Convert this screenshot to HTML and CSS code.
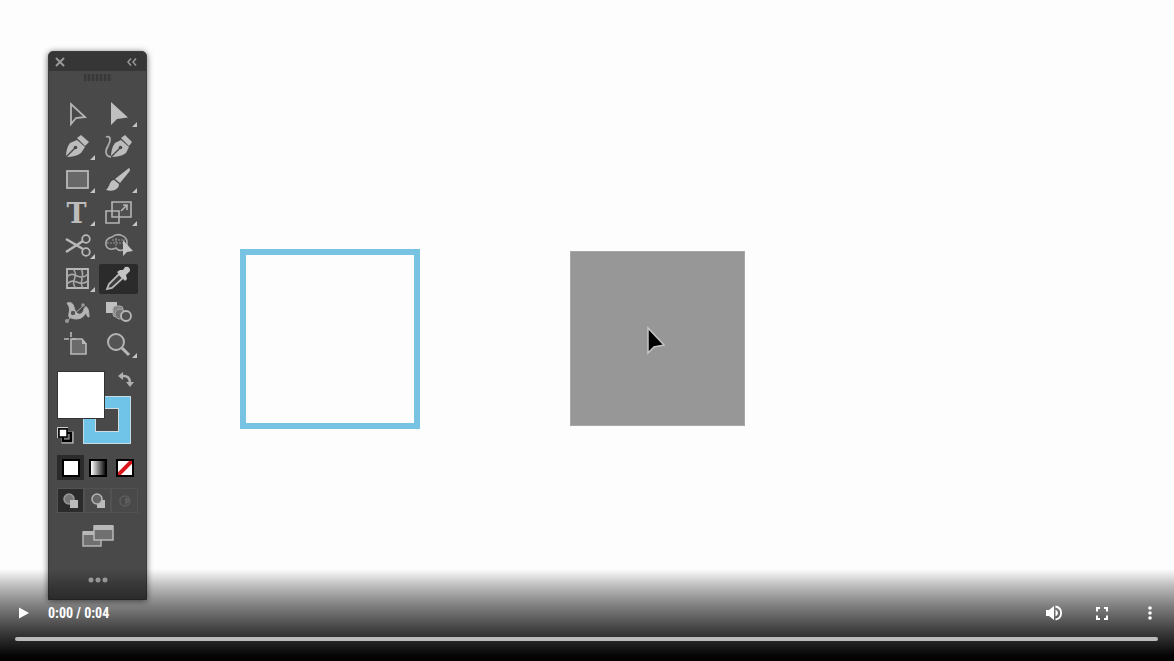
FILE: index.html
```
<!DOCTYPE html>
<html lang="en">
<head>
  <meta charset="UTF-8">
  <meta name="viewport" content="width=device-width, initial-scale=1.0">
  <title>Eyedropper tool</title>
  <link rel="stylesheet" href="styles.css">
</head>
<body>
  <main class="player">
    <div class="artboard">
      <div class="shape outlined"></div>
      <div class="shape filled"></div>
      <svg class="cursor" width="24" height="32" viewBox="0 0 24 32">
        <path d="M4 3V28L10 22L20 20Z" fill="#000" stroke="#c4c4c4" stroke-width="1.5"/>
      </svg>

      <section class="toolbox" aria-label="Tools">
        <header class="toolbox-header">
          <button type="button" aria-label="Close"><svg width="10" height="10" viewBox="0 0 10 10"><path d="M1 1L9 9M9 1L1 9" stroke="#999" stroke-width="2"/></svg></button>
          <button type="button" aria-label="Collapse"><svg width="10" height="8" viewBox="0 0 10 8"><path d="M4 0.5L1 4L4 7.5M9 0.5L6 4L9 7.5" fill="none" stroke="#999" stroke-width="1.5"/></svg></button>
        </header>
        <div class="grip"></div>

        <div class="tools">
          <button type="button" class="tool" aria-label="Selection">
            <svg viewBox="0 0 39 30"><path d="M14 5V25L19 19L28 18Z" fill="none" stroke="#b4b4b4" stroke-width="1.8"/></svg>
          </button>
          <button type="button" class="tool more" aria-label="Direct selection">
            <svg viewBox="0 0 39 30"><path d="M12 3V26L18 20L29 18.5Z" fill="#c0c0c0"/></svg>
          </button>
          <button type="button" class="tool more" aria-label="Pen">
            <svg viewBox="0 0 39 30">
              <path d="M9 25Q9 16 13 11L20 8L28 15L24 21Q19 25 9 25Z" fill="#bcbcbc"/>
              <path d="M20 6L24 3L32 10L28 14Z" fill="#bcbcbc"/>
              <path d="M9 25L18 16" stroke="#484848" stroke-width="1.4"/><circle cx="18.5" cy="15.5" r="1.8" fill="#484848"/>
            </svg>
          </button>
          <button type="button" class="tool" aria-label="Curvature">
            <svg viewBox="0 0 39 30">
              <path d="M12 25Q12 16 16 11L22 8L30 15L27 21Q22 25 12 25Z" fill="#bcbcbc"/>
              <path d="M22 6L26 3L33 10L30 14Z" fill="#bcbcbc"/>
              <path d="M12 25L21 16" stroke="#484848" stroke-width="1.4"/><circle cx="21.5" cy="15.5" r="1.8" fill="#484848"/>
              <path d="M7 5C12 3 12 9 9 14C6 19 6 24 12 25" fill="none" stroke="#aaa" stroke-width="1.8"/>
            </svg>
          </button>
          <button type="button" class="tool more" aria-label="Rectangle">
            <svg viewBox="0 0 39 30"><rect x="10" y="6" width="21" height="17" fill="#686868" stroke="#b8b8b8" stroke-width="1.8"/></svg>
          </button>
          <button type="button" class="tool more" aria-label="Paintbrush">
            <svg viewBox="0 0 39 30"><path d="M30 3Q32 4 30 7L21 18L16 14Z" fill="#c0c0c0"/><path d="M15 15L20 19C20 24 15 27 7 25C11 22 10 16 15 15Z" fill="#c0c0c0"/></svg>
          </button>
          <button type="button" class="tool type-tool more" aria-label="Type">T</button>
          <button type="button" class="tool more" aria-label="Scale">
            <svg viewBox="0 0 39 30"><path d="M13 4H32V19H13Z" fill="#505050" stroke="#b4b4b4" stroke-width="1.6"/><path d="M7 13H20V25H7Z" fill="none" stroke="#b4b4b4" stroke-width="1.6"/><path d="M22 13L28 7M24 7H28V12" fill="none" stroke="#b4b4b4" stroke-width="1.6"/></svg>
          </button>
          <button type="button" class="tool more" aria-label="Scissors">
            <svg viewBox="0 0 39 30"><path d="M9 8L26 18M9 21L26 10" stroke="#b8b8b8" stroke-width="2.6"/><circle cx="29" cy="8" r="3.8" fill="none" stroke="#b8b8b8" stroke-width="1.8"/><circle cx="29" cy="21" r="3.8" fill="none" stroke="#b8b8b8" stroke-width="1.8"/></svg>
          </button>
          <button type="button" class="tool" aria-label="Shape builder">
            <svg viewBox="0 0 39 30"><path d="M13 6C19 1 29 5 28 13C27 20 20 21 17 17C11 20 6 17 7 11C8 7 11 7 13 6Z" fill="none" stroke="#aaa" stroke-width="1.6"/><path d="M8 12H26M13 9H26M17 7V16" stroke="#969696" stroke-dasharray="2 1"/><path d="M24 9V25L28 21L34 20Z" fill="#c4c4c4"/></svg>
          </button>
          <button type="button" class="tool more" aria-label="Mesh">
            <svg viewBox="0 0 39 30"><path d="M10 5H31V24H10Z" fill="none" stroke="#b8b8b8" stroke-width="1.8"/><path d="M10 13C17 5 22 19 31 10M10 20C18 12 22 24 31 17M16 5C23 12 12 18 19 24M24 5C29 12 21 18 26 24" fill="none" stroke="#a8a8a8" stroke-width="1.6"/></svg>
          </button>
          <button type="button" class="tool active" aria-label="Eyedropper">
            <svg viewBox="0 0 39 30"><path d="M8 25L10 20L20 10L24 14L13 24Z" fill="#3c3c3c" stroke="#b8b8b8" stroke-width="1.8"/><path d="M18 8L21 6L24 6L26 3Q31 2 31 7L27 11L28 15L26 17Z" fill="#c4c4c4"/></svg>
          </button>
          <button type="button" class="tool" aria-label="Puppet warp">
            <svg viewBox="0 0 39 30"><path d="M10 6C18 4 16 11 19 15C22 19 26 17 27 12C29 7 32 11 32 20C29 20 30 14 28 17C25 23 17 23 12 20C11 15 15 13 10 6Z" fill="#b4b4b4" stroke="#b4b4b4"/><path d="M10 24L27 8" stroke="#aaa"/><circle cx="16" cy="16" r="2.8" fill="#555" stroke="#bbb"/><circle cx="10" cy="24" r="2" fill="#999"/><circle cx="26" cy="8" r="1.8" fill="#999"/></svg>
          </button>
          <button type="button" class="tool" aria-label="Blend">
            <svg viewBox="0 0 39 30"><path d="M7 5H18V16H7Z" fill="#c0c0c0"/><rect x="14" y="9" width="10" height="11" rx="3" fill="#858585" stroke="#aaa"/><circle cx="21" cy="17" r="5" fill="#727272" stroke="#aaa"/><circle cx="27" cy="19" r="5" fill="#505050" stroke="#b8b8b8" stroke-width="1.8"/></svg>
          </button>
          <button type="button" class="tool" aria-label="Artboard">
            <svg viewBox="0 0 39 30"><path d="M14 9H25L29 14V24H14Z" fill="#6b6b6b" stroke="#b8b8b8" stroke-width="1.6"/><path d="M25 9V14H30Z" fill="#b8b8b8"/><path d="M14 2V7M7 9H12M15 9H19" stroke="#b8b8b8" stroke-width="1.6"/></svg>
          </button>
          <button type="button" class="tool more" aria-label="Zoom">
            <svg viewBox="0 0 39 30"><circle cx="17" cy="12" r="8" fill="#555" stroke="#b4b4b4" stroke-width="2"/><path d="M23 18L30 25" stroke="#b8b8b8" stroke-width="3"/></svg>
          </button>
        </div>

        <div class="colors">
          <button type="button" class="stroke-color" aria-label="Stroke"></button>
          <button type="button" class="fill-color" aria-label="Fill"></button>
          <button type="button" class="swap" aria-label="Swap fill and stroke">
            <svg width="16" height="16" viewBox="0 0 16 16"><path d="M4 4Q12 3 12 11" fill="none" stroke="#b0b0b0" stroke-width="2.5"/><path d="M5 0V8L0 4ZM8 10H16L12 15Z" fill="#b0b0b0"/></svg>
          </button>
          <button type="button" class="defaults" aria-label="Default fill and stroke">
            <svg width="17" height="17" viewBox="0 0 17 17"><path d="M6 6H15V15H6Z" fill="#777" stroke="#ccc" stroke-width="3"/><path d="M6 6H14V14H6Z" fill="none" stroke="#000" stroke-width="2.5"/><path d="M2 2H10V10H2Z" fill="#fff" stroke="#000" stroke-width="1.5"/><path d="M0.5 11V0.5H11" fill="none" stroke="#ccc"/></svg>
          </button>
        </div>

        <div class="modes">
          <button type="button" class="mode active" aria-label="Color"><span class="chip"></span></button>
          <button type="button" class="mode" aria-label="Gradient"><span class="chip gradient"></span></button>
          <button type="button" class="mode" aria-label="None"><svg class="chip" viewBox="0 0 14 14"><path d="M0 14L14 0" stroke="#d9161c" stroke-width="4"/></svg></button>
        </div>

        <div class="modes drawing">
          <button type="button" class="mode active" aria-label="Draw normal">
            <svg width="16" height="16" viewBox="0 0 16 16"><circle cx="6" cy="6" r="5" fill="#777" stroke="#999" stroke-width="1.5"/><path d="M7 7H15V15H7Z" fill="#bbb"/></svg>
          </button>
          <button type="button" class="mode" aria-label="Draw behind">
            <svg width="16" height="16" viewBox="0 0 16 16"><path d="M7 7H15V15H7Z" fill="#bbb"/><circle cx="7" cy="6" r="5" fill="#666" stroke="#b4b4b4" stroke-width="1.5"/></svg>
          </button>
          <button type="button" class="mode" aria-label="Draw inside">
            <svg width="16" height="16" viewBox="0 0 16 16"><circle cx="8" cy="8" r="5" fill="none" stroke="#5c5c5c" stroke-width="1.5"/><path d="M8 5H12V9L8 12Z" fill="#5c5c5c"/></svg>
          </button>
        </div>

        <button type="button" class="screen-mode" aria-label="Change screen mode">
          <svg width="32" height="24" viewBox="0 0 32 24"><path d="M1 8H19V22H1Z" fill="#707070" stroke="#b4b4b4" stroke-width="1.5"/><path d="M1 7H12V11H1Z" fill="#b8b8b8"/><path d="M12 2H31V16H12Z" fill="#707070" stroke="#b8b8b8" stroke-width="1.5"/><path d="M12 1H31V6H12Z" fill="#b8b8b8"/></svg>
        </button>
        <button type="button" class="edit-toolbar" aria-label="Edit toolbar">
          <svg width="20" height="6" viewBox="0 0 20 6"><g fill="#b4b4b4"><circle cx="3" cy="3" r="2.5"/><circle cx="10" cy="3" r="2.5"/><circle cx="17" cy="3" r="2.5"/></g></svg>
        </button>
      </section>
    </div>

    <div class="controls">
      <div class="controls-row">
        <button type="button" aria-label="Play"><svg width="10" height="12" viewBox="0 0 10 12"><path d="M0 0.5L10 6L0 11.5Z" fill="#fff"/></svg></button>
        <span class="time">0:00 / 0:04</span>
        <button type="button" aria-label="Mute"><svg width="16" height="16" viewBox="0 0 16 16"><path d="M0 5H3L8 1V15L3 11H0Z" fill="#fff"/><path d="M9.5 4.5Q12 6 12 8Q12 10 9.5 11.5Z" fill="#fff"/><path d="M9.5 1.5C17 3 17 13 9.5 14.5" fill="none" stroke="#fff" stroke-width="1.8"/></svg></button>
        <button type="button" aria-label="Full screen"><svg width="12" height="13" viewBox="0 0 12 13"><path d="M1 4.5V1H4M8 1H11V4.5M11 8.5V12H8M4 12H1V8.5" fill="none" stroke="#fff" stroke-width="2"/></svg></button>
        <button type="button" aria-label="More options"><svg width="4" height="14" viewBox="0 0 4 14"><g fill="#fff"><circle cx="2" cy="2" r="1.8"/><circle cx="2" cy="7" r="1.8"/><circle cx="2" cy="12" r="1.8"/></g></svg></button>
      </div>
      <input type="range" class="timeline" min="0" max="4" value="0" aria-label="Video time">
    </div>
  </main>
</body>
</html>
```

FILE: styles.css
```
* {
  box-sizing: border-box;
}

body {
  margin: 0;
  font-family: Roboto, sans-serif;
  background-color: #fdfdfd;
}

button {
  display: flex;
  align-items: center;
  justify-content: center;
  padding: 0;
  border: none;
  background: none;
  cursor: pointer;
}

.player {
  position: relative;
  min-height: 100vh;
  overflow: hidden;
}

/* artwork on the canvas */
.shape {
  position: absolute;
}

.outlined {
  left: 240px;
  top: 249px;
  width: 180px;
  height: 180px;
  border: 6px solid #78c3e2;
}

.filled {
  left: 570px;
  top: 251px;
  width: 175px;
  height: 175px;
  background-color: #979797;
  border: 1px solid #a8a8a8;
}

.cursor {
  position: absolute;
  left: 644px;
  top: 325px;
}

.toolbox {
  position: absolute;
  left: 48px;
  top: 51px;
  width: 99px;
  display: flex;
  flex-direction: column;
  padding-bottom: 16px;
  background-color: #494949;
  border: 1px solid #3c3c3c;
  border-radius: 5px 5px 0 0;
  box-shadow: 0 1px 6px rgba(0, 0, 0, 0.6);
}

.toolbox-header {
  display: flex;
  align-items: center;
  justify-content: space-between;
  height: 19px;
  padding: 0 9px 0 6px;
  background-color: #363636;
  border-radius: 4px 4px 0 0;
}

.grip {
  width: 28px;
  height: 7px;
  margin: 3px auto 18px;
  background: repeating-linear-gradient(90deg, #383838 0 2px, #444 2px 4px);
}

.tools {
  display: grid;
  grid-template-columns: 1fr 1fr;
  gap: 3px;
  padding: 0 8px;
}

.tool {
  position: relative;
  height: 30px;
  border-radius: 2px;
}

.tool svg {
  width: 100%;
  height: 100%;
}

.tool.more::after {
  content: "";
  position: absolute;
  right: 1px;
  bottom: 2px;
  border-left: 5px solid transparent;
  border-bottom: 5px solid #c4c4c4;
}

.type-tool {
  font: bold 27px "DejaVu Serif", serif;
  color: #bcbcbc;
}

.active {
  background-color: #2b2b2b;
}

.colors {
  position: relative;
  height: 73px;
  margin: 11px 8px;
}

.fill-color,
.stroke-color {
  position: absolute;
  width: 48px;
  height: 48px;
}

.fill-color {
  left: 0;
  top: 0;
  background-color: #fff;
  border: 1px solid #333;
}

.stroke-color {
  right: 7px;
  bottom: 0;
  border: 12px solid #6fc4e8;
  outline: 1px solid #c4dce6;
  outline-offset: -1px;
  box-shadow: inset 0 0 0 1px #d0dde2;
}

.swap {
  position: absolute;
  right: 4px;
  top: 1px;
}

.defaults {
  position: absolute;
  left: 0;
  bottom: 0;
}

.modes {
  display: grid;
  grid-template-columns: repeat(3, 1fr);
  margin: 0 8px 8px;
}

.mode {
  height: 25px;
}

.chip {
  width: 18px;
  height: 18px;
  background-color: #fff;
  border: 2px solid #000;
}

.chip.gradient {
  background: linear-gradient(90deg, #fff, #111);
}

.drawing {
  margin-bottom: 10px;
}

.drawing .mode {
  border: 1px solid #525252;
}

.screen-mode {
  align-self: center;
  height: 26px;
}

.edit-toolbar {
  align-self: center;
  margin-top: 28px;
}

/* playback bar */
.controls {
  position: absolute;
  left: 0;
  right: 0;
  bottom: 0;
  padding-top: 28px;
  background: linear-gradient(rgba(0, 0, 0, 0), rgba(0, 0, 0, 0.25) 18%, rgba(0, 0, 0, 0.48) 38%, rgba(0, 0, 0, 0.78) 70%, rgba(0, 0, 0, 0.98) 94%, #000);
}

.controls-row {
  display: flex;
  align-items: center;
  height: 32px;
}

.controls-row button {
  width: 48px;
  height: 32px;
}

.time {
  flex: 1;
  font-family: "Roboto Condensed", "Liberation Sans Narrow", Roboto, sans-serif;
  font-size: 14px;
  font-weight: 700;
  color: #fff;
}

.timeline {
  appearance: none;
  display: block;
  width: calc(100% - 31px);
  height: 4px;
  margin: 8px 16px 20px 15px;
  background-color: #bbb;
  border-radius: 2px;
}

.timeline::-webkit-slider-thumb {
  appearance: none;
  width: 0;
  height: 0;
}
```
